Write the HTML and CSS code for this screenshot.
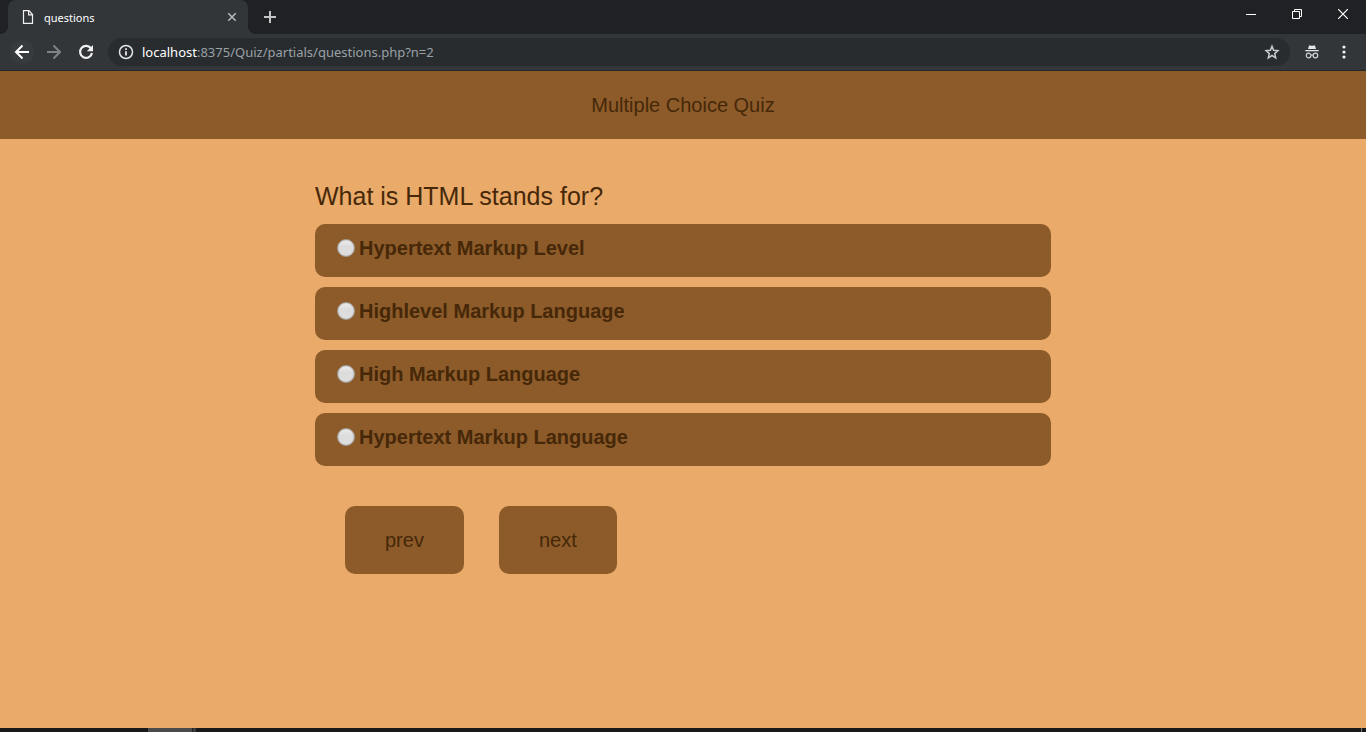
FILE: index.html
```html
<!DOCTYPE html>
<html lang="en">
<head>
<meta charset="utf-8">
<title>questions</title>
<link rel="stylesheet" href="styles.css">
</head>
<body>
<div class="tabstrip">
  <div class="tab">
    <svg class="tab-icon" width="12" height="14" viewBox="0 0 12 14" fill="none" stroke="#f1f1f1" stroke-width="1.2"><path d="M1.500.6h5.500L10.500 4.500v8.900h-9z"/><path d="M6.600.8v4h3.900"/></svg>
    <span class="tab-title">questions</span>
    <button class="tab-close" aria-label="Close tab"><svg width="10" height="10" viewBox="0 0 10 10" stroke="#b5b7b9" stroke-width="1.600"><path d="M1.300 1.300l7.400 7.400M8.700 1.300l-7.400 7.400"/></svg></button>
  </div>
  <button class="new-tab" aria-label="New tab"><svg width="12" height="12" viewBox="0 0 12 12" stroke="#c3c5c7" stroke-width="2"><path d="M6 0v12M0 6h12"/></svg></button>
  <div class="window-controls">
    <button aria-label="Minimize"><svg width="10" height="10" viewBox="0 0 10 10" stroke="#fff"><path d="M0 5.500h10"/></svg></button>
    <button aria-label="Restore"><svg width="10" height="10" viewBox="0 0 10 10" stroke="#fff" fill="none"><path d="M.5 2.500h7v7h-7zM2.500 2.500v-2h7v7h-2"/></svg></button>
    <button aria-label="Close window"><svg width="10" height="10" viewBox="0 0 10 10" stroke="#fff" stroke-width="1.200"><path d="M0 0l10 10M10 0L0 10"/></svg></button>
  </div>
</div>
<div class="toolbar">
  <button class="tool back" aria-label="Back"><svg width="24" height="24" viewBox="0 0 24 24" fill="none" stroke="#fff" stroke-width="2"><path d="M19 12H6.500M12.500 5.500L6 12l6.500 6.500"/></svg></button>
  <button class="tool" aria-label="Forward"><svg width="24" height="24" viewBox="0 0 24 24" fill="none" stroke="#808386" stroke-width="2"><path d="M5 12h12.500M11.500 5.500L18 12l-6.500 6.500"/></svg></button>
  <button class="tool" aria-label="Reload"><svg width="24" height="24" viewBox="0 0 24 24"><path d="M17.200 8.700A6 6 0 1 0 18 13" fill="none" stroke="#f1f1f1" stroke-width="2.200"/><path d="M19 5v6.200h-6.200z" fill="#f1f1f1"/></svg></button>
  <div class="address">
    <svg width="16" height="16" viewBox="0 0 16 16" fill="none" stroke="#e4e5e6" stroke-width="1.500"><circle cx="8" cy="8" r="6.500"/><path d="M8 7.200v4.300M8 4.300v1.700" stroke-width="1.800"/></svg>
    <span class="url"><span class="host">localhost</span>:8375/Quiz/partials/questions.php?n=2</span>
    <button class="star" aria-label="Bookmark this page"><svg width="16" height="16" viewBox="0 0 16 16" fill="none" stroke="#c8cacc" stroke-width="1.500"><path d="M8 2.300l1.600 4 4.300.4-3.200 2.900 1 4.200L8 11.500l-3.700 2.300 1-4.200-3.200-2.900 4.300-.4z"/></svg></button>
  </div>
  <svg class="incognito" width="16" height="16" viewBox="0 0 16 16"><path d="M5 1.500h1.900l1.100.6 1.100-.6H11l1 3.500H4zM1.300 6h13.400v1.200H1.300z" fill="#e4e5e6"/><g fill="none" stroke="#d0d2d4" stroke-width="1.200"><circle cx="4.600" cy="11.500" r="2.300"/><circle cx="11.400" cy="11.500" r="2.300"/><path d="M6.900 11.200q1.100-.7 2.200 0"/></g></svg>
  <button class="menu" aria-label="Menu"><svg width="4" height="14" viewBox="0 0 4 14" fill="#f1f1f1"><circle cx="2" cy="2" r="1.600"/><circle cx="2" cy="7" r="1.600"/><circle cx="2" cy="12" r="1.600"/></svg></button>
</div>
<header class="banner">Multiple Choice Quiz</header>
<main class="page">
  <form class="quiz">
    <fieldset class="choices">
      <legend class="question">What is HTML stands for?</legend>
      <label class="choice"><input type="radio" name="choice">Hypertext Markup Level</label>
      <label class="choice"><input type="radio" name="choice">Highlevel Markup Language</label>
      <label class="choice"><input type="radio" name="choice">High Markup Language</label>
      <label class="choice"><input type="radio" name="choice">Hypertext Markup Language</label>
    </fieldset>
    <div class="actions">
      <button type="button" class="nav">prev</button>
      <button type="button" class="nav">next</button>
    </div>
  </form>
</main>
<footer class="taskbar"><span class="task"></span><span class="task-edge"></span><span class="show-desktop"></span></footer>
</body>
</html>
```
FILE: styles.css
```css
* { box-sizing: border-box; }

body {
  margin: 0;
  min-height: 100vh;
  display: flex;
  flex-direction: column;
  background: #e9aa6a;
  color: #462809;
  font-family: "Liberation Sans", Arial, sans-serif;
  font-size: 20px;
}

button {
  padding: 0;
  border: 0;
  background: none;
  color: inherit;
  font: inherit;
}

svg { display: block; flex: none; }

.tabstrip {
  display: flex;
  height: 34px;
  padding-left: 8px;
  background: #202124;
}

.tab {
  position: relative;
  display: flex;
  align-items: center;
  width: 240px;
  padding: 0 11px 0 14px;
  gap: 10px;
  border-radius: 8px 8px 0 0;
  background: #323639;
  color: #fff;
  font-family: "Noto Sans", sans-serif;
  font-size: 11px;
}

.tab::before,
.tab::after {
  content: "";
  position: absolute;
  bottom: 0;
  width: 8px;
  height: 8px;
}

.tab::before {
  right: 100%;
  background: radial-gradient(circle at 0 0, transparent 8px, #323639 8px);
}

.tab::after {
  left: 100%;
  background: radial-gradient(circle at 100% 0, transparent 8px, #323639 8px);
}

.tab-title { flex: 1; }

.new-tab { padding: 0 16px; }

.window-controls {
  display: flex;
  margin-left: auto;
}

.window-controls button {
  display: grid;
  place-items: center;
  width: 46px;
  height: 28px;
}

.toolbar {
  display: flex;
  align-items: center;
  height: 37px;
  padding: 0 20px 0 10px;
  gap: 8px;
  border-bottom: 1px solid #26282b;
  background: #323639;
}

.tool svg {
  width: 24px;
  height: 24px;
}

.back {
  border-radius: 50%;
  background: #373b3e;
}

.address {
  flex: 1;
  display: flex;
  align-items: center;
  height: 28px;
  margin: 0 6px 0 2px;
  padding: 0 10px;
  gap: 8px;
  border-radius: 14px;
  background: #282c2f;
  color: #9aa0a6;
  font-family: "Noto Sans", sans-serif;
  font-size: 13px;
}

.url { flex: 1; }

.host { color: #fff; }

.menu { margin-left: 14px; }

.banner {
  padding: 22px 0;
  background: #8c5b29;
  line-height: 24px;
  text-align: center;
}

.page {
  flex: 1;
  padding: 40px 20px;
}

.quiz {
  max-width: 736px;
  margin: 0 auto;
}

.choices {
  display: flex;
  flex-direction: column;
  gap: 10px;
  margin: 0;
  padding: 0;
  border: 0;
}

.question {
  padding: 0 0 10px;
  font-size: 25px;
  line-height: 35px;
}

.choice {
  display: flex;
  align-items: center;
  padding: 10px 22px 15px;
  gap: 4px;
  border-radius: 10px;
  background: #8c5b29;
  font-weight: bold;
  line-height: 28px;
}

.choice input {
  appearance: none;
  width: 18px;
  height: 18px;
  margin: 0;
  border: 1px solid #a39d97;
  border-radius: 50%;
  background: linear-gradient(#ededed, #dcdcdc 40%, #dedede);
  box-shadow: inset 0 0 1px #999;
}

.choice input:checked { background: radial-gradient(circle, #444 4px, #dedede 5px); }

.actions {
  display: flex;
  gap: 35px;
  padding: 40px 30px;
}

.nav {
  padding: 22px 40px;
  border-radius: 10px;
  background: #8c5b29;
  line-height: 24px;
}

.taskbar {
  display: flex;
  height: 4px;
  padding-left: 148px;
  background: #191919;
}

.task {
  width: 44px;
  background: #4b4b4b;
}

.task-edge {
  width: 4px;
  border-left: 1px solid #222;
  background: #3b3b3b;
}

.show-desktop {
  width: 1px;
  margin: 0 4px 0 auto;
  background: #777;
}
```
